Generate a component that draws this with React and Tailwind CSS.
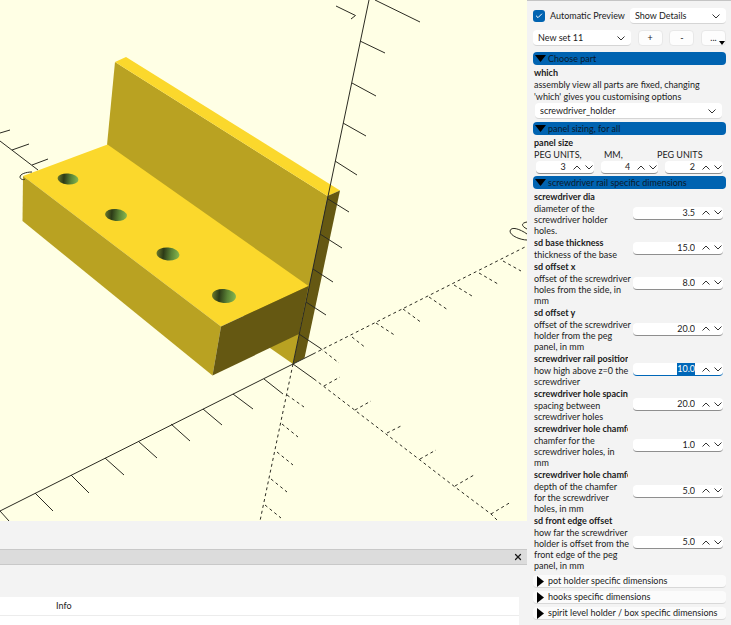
import { useEffect, useRef, useState } from "react";
import { Check, X } from "lucide-react";

const railParams = [
  { id: "dia", name: "screwdriver dia", text: "diameter of the\nscrewdriver holder\nholes.", value: "3.5" },
  { id: "thickness", name: "sd base thickness", text: "thickness of the base", value: "15.0" },
  { id: "offset-x", name: "sd offset x", text: "offset of the screwdriver\nholes from the side, in\nmm", value: "8.0" },
  { id: "offset-y", name: "sd offset y", text: "offset of the screwdriver\nholder from the peg\npanel, in mm", value: "20.0" },
  { id: "rail", name: "screwdriver rail position", text: "how high above z=0 the\nscrewdriver", value: "10.0", active: true },
  { id: "spacing", name: "screwdriver hole spacing", text: "spacing between\nscrewdriver holes", value: "20.0" },
  { id: "chamfer", name: "screwdriver hole chamfer", text: "chamfer for the\nscrewdriver holes, in\nmm", value: "1.0" },
  { id: "chamfer-depth", name: "screwdriver hole chamfer", text: "depth of the chamfer\nfor the screwdriver\nholes, in mm", value: "5.0" },
  { id: "front-edge", name: "sd front edge offset", text: "how far the screwdriver\nholder is offset from the\nfront edge of the peg\npanel, in mm", value: "5.0" },
];

const closedSections = [
  "pot holder specific dimensions",
  "hooks specific dimensions",
  "spirit level holder / box specific dimensions",
];

// solid axes and their ticks
const solidLines =
  "M369 0L293 364M375 0L420 22M360 41L385 53M352 83L376 96M343 123L366 136M335 161L357 175M328 199L349 212" +
  "M320 234L342 248M313 269L333 282M306 302L326 315M299 334L320 348" +
  "M293 364L0 511M264 379L283 394M233 394L253 409M203 409L222 425M171 424L190 441M138 441L157 458" +
  "M105 458L124 475M71 475L89 493M35 493L53 511M0 511L9 521" +
  "M293 364L313 354M293 364L314 379" +
  "M0 141L38 170M0 133L10 130M12 150L29 144M32 165L48 159";

// negative / hidden parts of the axes
const dashedLines = [
  "M293 364L260 521",
  "M287 395L304 407", "M282 424L298 437", "M277 452L293 465", "M271 479L287 492", "M265 505L281 518",
  "M313 354L527 246",
  "M320 348L339 363", "M352 337L366 348", "M376 323L396 336", "M403 309L422 323", "M429 297L448 310",
  "M454 285L472 296", "M479 273L498 284", "M503 261L521 271",
  "M314 379L386 434L420 460L455 487L491 514L498 521",
  "M324 386L340 377", "M355 410L371 401", "M387 433L403 425", "M420 459L436 450", "M455 486L474 475", "M491 514L511 502",
];

const holes = [
  { x: 68, y: 179, rx: 10.5, ry: 5.5 },
  { x: 116, y: 215, rx: 11, ry: 6 },
  { x: 168, y: 254, rx: 11.5, ry: 6.5 },
  { x: 224, y: 296, rx: 12, ry: 7 },
];

function Viewport() {
  return (
    <svg viewBox="0 0 527 521" preserveAspectRatio="xMidYMid slice" className="block w-full min-h-0 flex-1 bg-[#ffffe5]">
      <defs>
        <linearGradient id="bore">
          <stop offset="0" stopColor="#6b7a2c" />
          <stop offset="0.3" stopColor="#2c3a17" />
          <stop offset="0.65" stopColor="#5c8537" />
          <stop offset="1" stopColor="#86b850" />
        </linearGradient>
      </defs>

      {/* peg panel */}
      <path d="M115 62L327.5 196L293 364L270 348L107 145Z" fill="#b9a222" />
      <path d="M115 62L126 57L340 190.5L327.5 196Z" fill="#fbd82c" />
      <path d="M327.5 196L340 190.5L304.500 358L293 364Z" fill="#655812" />

      {/* rail */}
      <path d="M23 176L107.500 144.500L308.500 286L221 326.500Z" fill="#fbd82c" />
      <path d="M23 176L221 326.500L212.500 375.500L22.500 221Z" fill="#b9a222" />
      <path d="M221 326.500L308.500 286L299 334L212.500 375.500Z" fill="#655812" />
      {holes.map((h) => (
        <ellipse key={h.x} cx={h.x} cy={h.y} rx={h.rx} ry={h.ry} transform={`rotate(5 ${h.x} ${h.y})`} fill="url(#bore)" />
      ))}

      <g fill="none" stroke="#2b2b22" strokeWidth="1">
        <path d={solidLines} />
        {dashedLines.map((d) => (
          <path key={d} d={d} strokeDasharray="3 3" />
        ))}
        {/* scale marks */}
        <path d="M336 6L355.500 15.500L351 19" />
        <path d="M32 172C26 172 20 174 20 177C20 179 23 180.500 25 179" />
        <path d="M527 234C520 229 511 226 510 231C510 236 521 240 527 240M527 222C521 223 521 226 527 229" />
      </g>
    </svg>
  );
}

function Chevron({ up, className = "" }) {
  return (
    <svg viewBox="0 0 8 5" className={`block h-[5px] w-2 ${className}`} fill="none" stroke="#333" strokeWidth="1">
      <path d={up ? "M0.500 4.500L4 1L7.500 4.500" : "M0.500 0.500L4 4L7.500 0.500"} />
    </svg>
  );
}

function Dropdown({ label, value, className }) {
  return (
    <div className={`relative h-4 rounded-sm border-b border-[#d5d5d5] bg-white ${className}`}>
      <select aria-label={label} defaultValue={value} className="h-full w-full appearance-none bg-transparent pr-4 pl-[5px] outline-none">
        <option>{value}</option>
      </select>
      <Chevron className="pointer-events-none absolute top-[6px] right-[6px]" />
    </div>
  );
}

function SpinBox({ id, label, value, active, className = "" }) {
  const [number, setNumber] = useState(value);
  const input = useRef(null);
  const digits = value.includes(".") ? 1 : 0;

  useEffect(() => {
    if (active) {
      input.current.focus();
      input.current.select();
    }
  }, [active]);

  const step = (by) => setNumber((Number(number) + by).toFixed(digits));

  return (
    <div className={`flex h-[13px] items-center rounded-sm border-b bg-white pr-px ${active ? "border-[#0067b8]" : "border-[#8e8e8e]"} ${className}`}>
      <input
        ref={input}
        id={id}
        aria-label={label}
        value={number}
        onChange={(e) => setNumber(e.target.value)}
        className="h-3 min-w-0 flex-1 text-right leading-3 outline-none selection:bg-[#0067b8] selection:text-white"
      />
      <button type="button" aria-label="Increase" onClick={() => step(1)} className="ml-[7px]">
        <Chevron up />
      </button>
      <button type="button" aria-label="Decrease" onClick={() => step(-1)} className="ml-1">
        <Chevron />
      </button>
    </div>
  );
}

function OpenHeader({ children }) {
  return (
    <button type="button" aria-expanded="true" className="flex h-[13px] w-full items-center gap-[2px] rounded-sm bg-[#0063b1] pl-[2px] text-left text-[#0b1a2b]">
      <svg viewBox="0 0 11 7" className="h-[7px] w-[11px]">
        <path d="M0 0H11L5.500 7Z" fill="#000" />
      </svg>
      {children}
    </button>
  );
}

function ClosedHeader({ children }) {
  return (
    <button type="button" aria-expanded="false" className="flex h-[13px] w-full items-center gap-1 rounded-sm border-b border-[#d8d8d8] bg-[#fbfbfb] pl-1 text-left">
      <svg viewBox="0 0 7 11" className="h-[11px] w-[7px]">
        <path d="M0 0L7 5.500L0 11Z" fill="#000" />
      </svg>
      {children}
    </button>
  );
}

function ToolButton({ label, children }) {
  return (
    <button type="button" aria-label={label} className="relative h-4 w-[25px] rounded-sm border border-[#e8e8e8] bg-[#fdfdfd] leading-3">
      {children}
    </button>
  );
}

function Customizer() {
  return (
    <aside className="flex w-[204px] shrink-0 flex-col border-t border-[#c4c4c4] bg-[#f3f3f3] pt-[7px] pr-[5px] pl-[6px]">
      <div className="flex h-4 items-center justify-between">
        <label className="flex items-center gap-[5px]">
          <span className="relative size-3">
            <input type="checkbox" defaultChecked className="block size-3 appearance-none rounded-[3px] bg-[#0063b1]" />
            <Check className="pointer-events-none absolute top-[2px] left-[2px] size-2 text-white" strokeWidth={3} />
          </span>
          Automatic Preview
        </label>
        <Dropdown label="Detail level" value="Show Details" className="w-[96px]" />
      </div>

      <div className="mt-[6px] flex items-center justify-between">
        <Dropdown label="Preset" value="New set 11" className="w-[98px]" />
        <ToolButton label="Add preset">+</ToolButton>
        <ToolButton label="Remove preset">-</ToolButton>
        <ToolButton label="More">
          ...
          <svg viewBox="0 0 6 4" className="absolute right-0 bottom-0 h-1 w-[6px]">
            <path d="M0 0H6L3 4Z" fill="#000" />
          </svg>
        </ToolButton>
      </div>

      <section className="mt-[6px]">
        <OpenHeader>Choose part</OpenHeader>
        <div className="pt-[2px] pr-1 pl-px">
          <h3 className="leading-[12px] font-bold">which</h3>
          <p className="leading-[12px]">assembly view all parts are fixed, changing 'which' gives you customising options</p>
          <Dropdown label="which" value="screwdriver_holder" className="ml-px" />
        </div>
      </section>

      <section className="mt-[3px]">
        <OpenHeader>panel sizing, for all</OpenHeader>
        <div className="pt-[2px] pr-[3px] pl-px">
          <h3 className="leading-[12px] font-bold">panel size</h3>
          <div className="grid grid-cols-[70px_53px_1fr] leading-[12px]">
            <span>PEG UNITS,</span>
            <span>MM,</span>
            <span>PEG UNITS</span>
          </div>
          <div className="grid grid-cols-3 gap-[7px] pl-[2px]">
            <SpinBox label="Width in peg units" value="3" />
            <SpinBox label="Thickness in mm" value="4" />
            <SpinBox label="Height in peg units" value="2" />
          </div>
        </div>
      </section>

      <section className="mt-[2px]">
        <OpenHeader>screwdriver rail specific dimensions</OpenHeader>
        <div className="pt-px pr-[3px] pl-px">
          {railParams.map((p) => (
            <div key={p.id} className="flex items-center justify-between">
              <div className="w-[94px]">
                <label htmlFor={p.id} className="block overflow-hidden leading-[13px] font-bold whitespace-nowrap">{p.name}</label>
                <p className="leading-[11px] whitespace-pre">{p.text}</p>
              </div>
              <SpinBox id={p.id} value={p.value} active={p.active} className="w-[90px]" />
            </div>
          ))}
        </div>
      </section>

      <div className="mt-1 flex flex-col gap-[3px]">
        {closedSections.map((title) => (
          <ClosedHeader key={title}>{title}</ClosedHeader>
        ))}
      </div>
    </aside>
  );
}

export default function App() {
  return (
    <div className="flex h-screen overflow-hidden bg-[#f3f3f3] font-['Lato',sans-serif] text-[9px] text-[#1b1b1b]">
      <main className="flex min-w-0 flex-1 flex-col">
        <Viewport />
        <div className="mt-7 flex h-4 shrink-0 items-center justify-end border-y border-[#c8c8c8] bg-[#dcdcdc] pr-1">
          <button type="button" aria-label="Close">
            <X className="size-[10px]" strokeWidth={3} />
          </button>
        </div>
        <div className="mt-8 mr-2 h-7 shrink-0 bg-white">
          <table className="w-full text-left leading-[18px]">
            <thead>
              <tr className="border-b border-[#ececec]">
                <td className="w-[56px]" />
                <th className="font-normal">Info</th>
              </tr>
            </thead>
          </table>
        </div>
      </main>
      <Customizer />
    </div>
  );
}
